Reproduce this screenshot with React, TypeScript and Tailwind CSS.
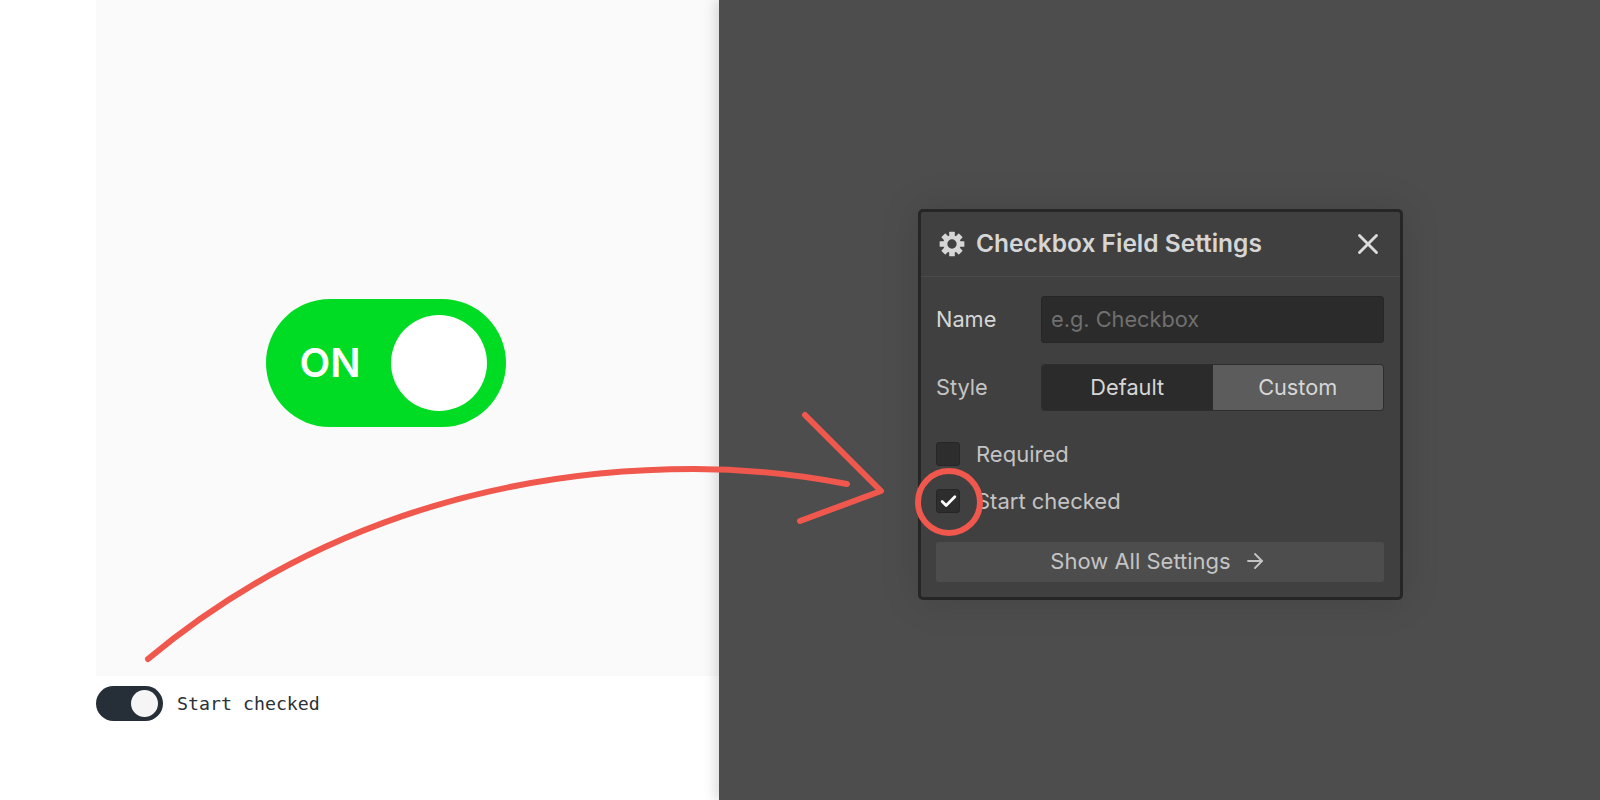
import { ArrowRight, Check, X } from 'lucide-react'

const teeth = [0, 45, 90, 135, 180, 225, 270, 315]

const Gear = () => (
	<svg width={26} height={26} viewBox="0 0 24 24" fill="#d6d6d6">
		{teeth.map((deg) => (
			<rect key={deg} x={9.4} y={0.6} width={5.2} height={6} rx={0.6} transform={`rotate(${deg} 12 12)`} />
		))}
		<circle cx={12} cy={12} r={6.2} fill="none" stroke="#d6d6d6" strokeWidth={3.8} />
	</svg>
)

const CheckRow = ({ label, checked }: { label: string; checked?: boolean }) => (
	<div className="flex h-6 items-center gap-4">
		<div className="flex h-6 w-6 items-center justify-center rounded-[3px] border border-[#262626] bg-[#2d2d2d]">
			{checked && <Check size={19} strokeWidth={3.5} className="text-white" />}
		</div>
		<span className="text-[22px] text-[#c4c4c4]">{label}</span>
	</div>
)

const App = () => {
	return (
		<div className="relative flex h-[800px] w-[1600px] overflow-hidden bg-white font-['Inter',sans-serif]">
			<div className="flex w-[719px] flex-col pl-[96px]">
				<div className="flex h-[676px] items-center justify-center bg-[#fafafa] pr-[44px] pt-[50px]">
					<div className="flex h-[128px] w-[240px] items-center justify-between rounded-full bg-[#00dc23] pl-[34px] pr-[19px]">
						<span className="text-[40px] font-semibold text-white">ON</span>
						<div className="h-24 w-24 rounded-full bg-white" />
					</div>
				</div>
				<div className="mt-[10px] flex items-center gap-[14px]">
					<div className="flex h-[35px] w-[67px] items-center justify-end rounded-full bg-[#262f38] pr-[5px]">
						<div className="h-[27px] w-[27px] rounded-full bg-[#f5f5f5]" />
					</div>
					<span className="font-['DejaVu_Sans_Mono',monospace] text-[18.25px] text-[#2a3138]">
						Start checked
					</span>
				</div>
			</div>
			<div className="flex flex-1 items-center justify-center bg-[#4d4d4d] pl-[2px] pt-[9px] shadow-[-5px_0_10px_rgba(0,0,0,0.12)]">
				<div className="w-[485px] rounded-[5px] border-[3px] border-[#262626] bg-[#404040] shadow-[0_0_40px_rgba(0,0,0,0.12)]">
					<div className="flex h-[65px] items-center justify-between border-b border-[#4a4a4a] pl-[18px] pr-[15px]">
						<div className="flex items-center gap-[11px]">
							<Gear />
							<span className="pb-[2px] text-[24.5px] font-semibold text-[#d6d6d6]">
								Checkbox Field Settings
							</span>
						</div>
						<X size={34} strokeWidth={2} className="text-[#dcdcdc]" />
					</div>
					<div className="pb-[15px] pl-[15px] pr-4 pt-[19px]">
						<div className="flex items-center">
							<span className="w-[105px] text-[21.75px] text-[#d6d6d6]">Name</span>
							<div className="flex h-[47px] flex-1 items-center rounded-[3px] border border-[#262626] bg-[#2b2b2b] px-[9px] text-[21.75px] text-[#707070]">
								e.g. Checkbox
							</div>
						</div>
						<div className="mt-[21px] flex items-center">
							<span className="w-[105px] text-[21.75px] text-[#c4c4c4]">Style</span>
							<div className="flex h-[47px] flex-1 rounded-[3px] border border-[#2e2e2e] text-[21.75px] text-[#d6d6d6]">
								<div className="flex flex-1 items-center justify-center rounded-l-[3px] bg-[#2b2b2b]">
									Default
								</div>
								<div className="flex flex-1 items-center justify-center rounded-r-[3px] bg-[#5c5c5c]">
									Custom
								</div>
							</div>
						</div>
						<div className="mt-[31px] flex flex-col gap-[23px]">
							<CheckRow label="Required" />
							<CheckRow label="Start checked" checked />
						</div>
						<div className="mt-[29px] flex h-10 items-center justify-center gap-3 rounded-[3px] bg-[#4d4d4d] pb-[2px] pr-[3px] text-[22px] text-[#c4c4c4]">
							Show All Settings
							<ArrowRight size={24} strokeWidth={1.8} />
						</div>
					</div>
				</div>
			</div>
			{/* hand drawn annotation on top of both halves */}
			<svg
				className="pointer-events-none absolute inset-0"
				width={1600}
				height={800}
				fill="none"
				stroke="#f0574d"
				strokeWidth={6}
				strokeLinecap="round"
				strokeLinejoin="round"
			>
				<path d="M148 659C300 532 490 469 694 469C750 469 800 475 847 484" />
				<path d="M805 415L881 491L800 521" />
				<ellipse cx={949} cy={502} rx={31} ry={31} />
			</svg>
		</div>
	)
}

export default App
